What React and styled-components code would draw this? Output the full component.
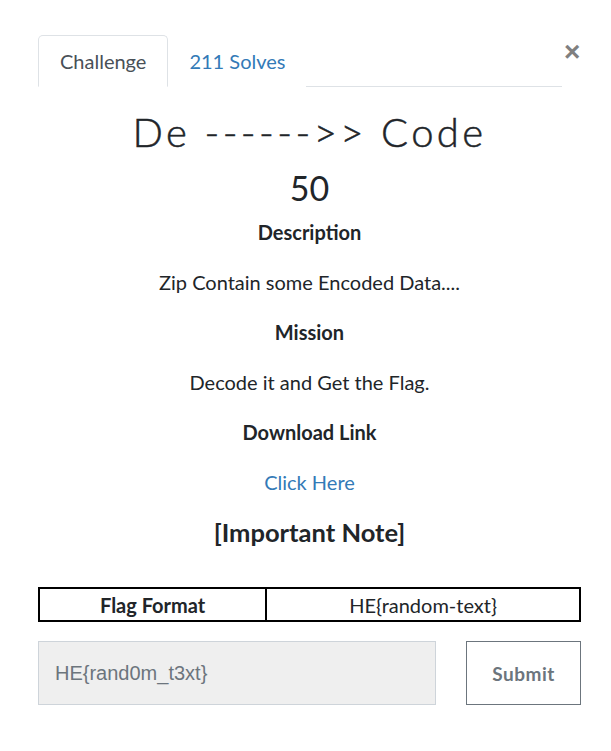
import React, { useState } from "react";
import styled, { createGlobalStyle } from "styled-components";

const GlobalStyle = createGlobalStyle`
  body {
    margin: 0;
    background: #fff;
    font-family: Lato, "Noto Sans", sans-serif;
    color: #212529;
  }
  * { box-sizing: border-box; }
`;

const Modal = styled.div`
  width: 611px;
  padding: 35px 30px 40px 38px;
`;

const Header = styled.div`
  display: flex;
  align-items: flex-start;
`;

const Tabs = styled.ul`
  flex: 1;
  display: flex;
  list-style: none;
  margin: 0;
  padding: 0;
  border-bottom: 1px solid #dee2e6;
`;

const Tab = styled.li`
  margin-bottom: -1px;
  padding: 0 ${p => (p.active ? "21px" : "20px")};
  height: 52px;
  display: flex;
  align-items: center;
  font-size: 20px;
  border: 1px solid ${p => (p.active ? "#dee2e6" : "transparent")};
  border-bottom-color: ${p => (p.active ? "#fff" : "transparent")};
  border-radius: 5px 5px 0 0;
  background: #fff;
  color: ${p => (p.active ? "#495057" : "#337ab7")};
  cursor: pointer;
`;

const Close = styled.button`
  background: none;
  border: none;
  padding: 0;
  margin: 4px 1px 0 2px;
  width: 16px;
  height: 26px;
  font-size: 28px;
  line-height: 26px;
  font-weight: 700;
  color: #808080;
  font-family: "Liberation Sans", sans-serif;
  cursor: pointer;
`;

const Body = styled.div`
  text-align: center;
`;

const Title = styled.h2`
  margin: 20px 0 0;
  font-size: 40px;
  font-weight: 300;
  letter-spacing: 3.4px;
  line-height: 50px;
  -webkit-text-stroke: 0.5px #212529;
`;

const Value = styled.h3`
  margin: 12px 0 0;
  font-size: 34px;
  font-weight: 400;
  line-height: 38px;
`;

const Para = styled.p`
  margin: 0;
  line-height: 50px;
  font-size: ${p => (p.large ? "25.5px" : "20px")};
  font-weight: ${p => (p.bold ? 700 : 400)};
`;

const Link = styled.a`
  color: #337ab7;
  text-decoration: none;
`;

const FormatTable = styled.table`
  margin-top: 30px;
  width: 100%;
  border-collapse: collapse;
  font-size: 20px;
  td {
    border: 2px solid #000;
    height: 33px;
    padding: 0;
    text-align: center;
  }
`;

const Row = styled.form`
  display: flex;
  gap: 30px;
  margin-top: 19px;
`;

const Input = styled.input`
  flex: 1;
  height: 64px;
  border: 1px solid #ced4da;
  background: #efefef;
  padding: 0 16px;
  font-family: "Liberation Sans", sans-serif;
  font-size: 20px;
  color: #495057;
  &::placeholder { color: #6c757d; }
`;

const Submit = styled.button`
  width: 115px;
  height: 64px;
  background: #fff;
  border: 1px solid #6c757d;
  color: #6c757d;
  font-family: Lato, sans-serif;
  font-weight: 700;
  font-size: 19px;
  letter-spacing: 0.5px;
`;

export default function App() {
  const [tab, setTab] = useState("challenge");
  return (
    <Modal>
      <GlobalStyle />
      <Header>
        <Tabs>
          <Tab active={tab === "challenge"} onClick={() => setTab("challenge")}>Challenge</Tab>
          <Tab active={tab === "solves"} onClick={() => setTab("solves")}>211 Solves</Tab>
        </Tabs>
        <Close aria-label="Close">×</Close>
      </Header>
      <Body>
        <Title>De ------&gt;&gt; Code</Title>
        <Value>50</Value>
        <Para bold>Description</Para>
        <Para>Zip Contain some Encoded Data....</Para>
        <Para bold>Mission</Para>
        <Para>Decode it and Get the Flag.</Para>
        <Para bold>Download Link</Para>
        <Para><Link href="#">Click Here</Link></Para>
        <Para bold large>[Important Note]</Para>
        <FormatTable>
          <tbody>
            <tr>
              <td style={{ width: "42%" }}><b>Flag Format</b></td>
              <td>HE{"{random-text}"}</td>
            </tr>
          </tbody>
        </FormatTable>
        <Row onSubmit={e => e.preventDefault()}>
          <Input placeholder="HE{rand0m_t3xt}" />
          <Submit type="submit">Submit</Submit>
        </Row>
      </Body>
    </Modal>
  );
}
